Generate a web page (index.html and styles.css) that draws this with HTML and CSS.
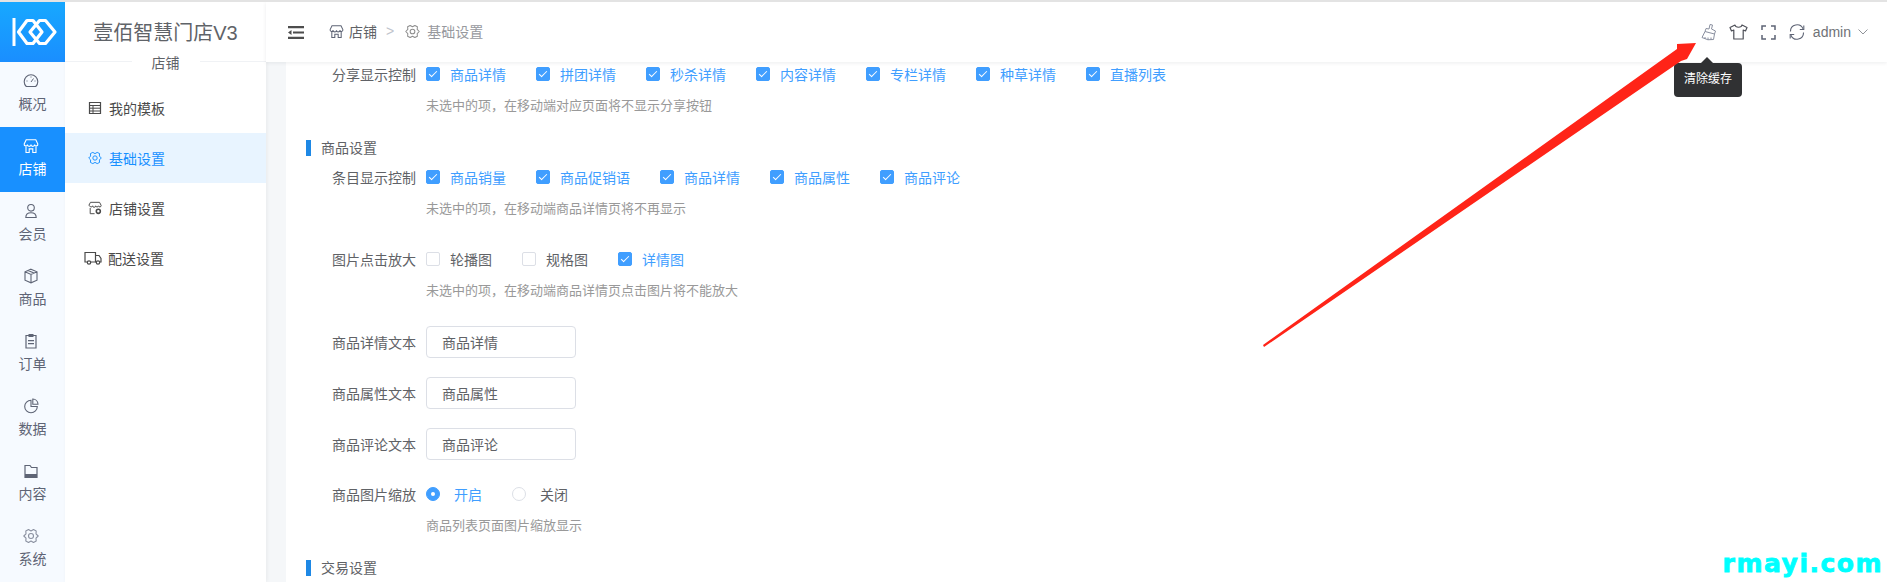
FILE: index.html
```html
<!DOCTYPE html>
<html lang="zh-CN">
<head>
    <meta charset="UTF-8">
    <title>壹佰智慧门店V3</title>
    <link rel="stylesheet" href="styles.css">
</head>
<body>
    <svg class="defs" width="0" height="0">
        <symbol id="i-store" viewBox="0 0 16 16">
            <path d="M3.2 1.8h9.6l2 4.2a1.6 1.6 0 0 1-3.2.6 1.8 1.8 0 0 1-3.6 0 1.8 1.8 0 0 1-3.6 0 1.6 1.6 0 0 1-3.2-.6z" fill="none" stroke="currentColor" stroke-width="1.1"/>
            <path d="M3 8.5v6h3.2v-3.6h3.6v3.6H13v-6" fill="none" stroke="currentColor" stroke-width="1.1"/>
        </symbol>
        <symbol id="i-gear" viewBox="0 0 16 16">
            <path d="M.8 8L3 5.800 2.800 2.900 5.500 1.600 8 3l2.500-1.400 2.700 1.300L13 5.800 15.200 8 13 10.200l.2 2.900-2.700 1.300L8 13l-2.500 1.400-2.700-1.300.2-2.900z" fill="none" stroke="currentColor" stroke-width="1.100" stroke-linejoin="round"/>
            <circle cx="8" cy="8" r="2.500" fill="none" stroke="currentColor" stroke-width="1.100"/>
        </symbol>
    </svg>

    <div class="rail">
        <div class="logo">
            <svg width="48" height="30" viewBox="0 0 48 30">
                <rect x="1.500" y="1" width="3" height="28" fill="#fff"/>
                <path d="M7.500 15L16 3.500h6L31 15l-9 11.500h-6z" fill="none" stroke="#fff" stroke-width="3.200" stroke-linejoin="round"/>
                <path d="M19 15l9.500-11.500h6L44 15l-9.500 11.500h-6z" fill="none" stroke="#fff" stroke-width="3.200" stroke-linejoin="round"/>
            </svg>
        </div>
        <a class="rail-item">
            <svg class="rail-icon" viewBox="0 0 16 16"><path d="M3.300 13.500a6.800 6.800 0 1 1 9.400 0z" fill="none" stroke="currentColor" stroke-width="1.100"/><path d="M8 9l2.500-3.500M8 3.500v1M3.500 8h1M11.500 8h1" stroke="currentColor" fill="none"/></svg>
            <span>概况</span>
        </a>
        <a class="rail-item active">
            <svg class="rail-icon"><use href="#i-store"/></svg>
            <span>店铺</span>
        </a>
        <a class="rail-item">
            <svg class="rail-icon" viewBox="0 0 16 16"><circle cx="8" cy="4.800" r="3.300" fill="none" stroke="currentColor" stroke-width="1.100"/><path d="M2.800 14.500c0-3.200 2-4.800 5.200-4.800s5.200 1.600 5.200 4.800z" fill="none" stroke="currentColor" stroke-width="1.100"/></svg>
            <span>会员</span>
        </a>
        <a class="rail-item">
            <svg class="rail-icon" viewBox="0 0 16 16"><path d="M8 1.200l6 2.600v8.400l-6 2.600-6-2.600V3.800z M2 3.800l6 2.600 6-2.600 M8 6.400v8.400 M5 2.500l6 2.600" fill="none" stroke="currentColor" stroke-width="1.100"/></svg>
            <span>商品</span>
        </a>
        <a class="rail-item">
            <svg class="rail-icon" viewBox="0 0 16 16"><path d="M3 2.500h10v12.500H3z" fill="none" stroke="currentColor" stroke-width="1.200"/><path d="M5.500 1h5v3h-5zM5 7h6v1.200H5zM5 10h6v1.200H5z" fill="currentColor"/></svg>
            <span>订单</span>
        </a>
        <a class="rail-item">
            <svg class="rail-icon" viewBox="0 0 16 16"><path d="M8 2.200a6.300 6.300 0 1 0 6.300 6.300H8z" fill="none" stroke="currentColor" stroke-width="1.100"/><path d="M9.800 1v5.200H15A5.400 5.400 0 0 0 9.800 1z" fill="none" stroke="currentColor" stroke-width="1.100"/></svg>
            <span>数据</span>
        </a>
        <a class="rail-item">
            <svg class="rail-icon" viewBox="0 0 16 16"><path d="M2 2.500h5l1.500 2H14v10H2z" fill="none" stroke="currentColor" stroke-width="1.200"/><path d="M2 11h12v3.500H2z" fill="currentColor"/></svg>
            <span>内容</span>
        </a>
        <a class="rail-item">
            <svg class="rail-icon rail-icon-gear"><use href="#i-gear"/></svg>
            <span>系统</span>
        </a>
    </div>

    <div class="sidebar">
        <div class="brand">壹佰智慧门店V3</div>
        <div class="brand-sub"><span>店铺</span></div>
        <ul class="menu">
            <li class="menu-item">
                <svg class="menu-icon" viewBox="0 0 14 14"><path d="M1.500 1.500h11v11h-11z" fill="none" stroke="currentColor" stroke-width="1.200"/><path d="M1.500 4.500h11M1.500 7.200h11M1.500 10h11M5 4.500v8" stroke="currentColor" fill="none"/></svg>
                <span>我的模板</span>
            </li>
            <li class="menu-item active">
                <svg class="menu-icon"><use href="#i-gear"/></svg>
                <span>基础设置</span>
            </li>
            <li class="menu-item">
                <svg class="menu-icon" viewBox="0 0 16 16"><path d="M2.800 1.500h10.400l1.800 3.500a1.500 1.500 0 0 1-3 .5 1.700 1.700 0 0 1-3.300 0 1.700 1.700 0 0 1-3.400 0 1.700 1.700 0 0 1-3.300 0 1.500 1.500 0 0 1-1-.5zM2.500 8v6.500h5" fill="none" stroke="currentColor" stroke-width="1.100"/><circle cx="11.800" cy="11.800" r="2.300" fill="none" stroke="currentColor" stroke-width="1.800"/></svg>
                <span>店铺设置</span>
            </li>
            <li class="menu-item">
                <svg class="menu-icon menu-icon-wide" viewBox="0 0 18 16"><path d="M3.500 12H1V2.500h10.500V12H6.500" fill="none" stroke="currentColor" stroke-width="1.200"/><path d="M11.500 5.500H15l2 3V12h-1.500M11.500 12h1" fill="none" stroke="currentColor" stroke-width="1.200"/><circle cx="5" cy="12.500" r="1.700" fill="none" stroke="currentColor" stroke-width="1.200"/><circle cx="14" cy="12.500" r="1.700" fill="none" stroke="currentColor" stroke-width="1.200"/></svg>
                <span>配送设置</span>
            </li>
        </ul>
    </div>

    <div class="page">
        <div class="header">
            <svg class="fold" width="16" height="13" viewBox="0 0 16 13"><path d="M0 0h16v2.200H0zM5 5.400h11v2.200H5zM0 10.800h16V13H0zM3.500 4v5L0 6.500z" fill="#4d4d4d"/></svg>
            <div class="crumbs">
                <svg class="crumb-icon crumb-store"><use href="#i-store"/></svg>
                <span class="crumb-main">店铺</span>
                <span class="crumb-sep">&gt;</span>
                <svg class="crumb-icon crumb-gear"><use href="#i-gear"/></svg>
                <span class="crumb-cur">基础设置</span>
            </div>
            <div class="tools">
                <svg class="tool broom" viewBox="0 0 16 17"><path d="M9 .5l2.500.5-1 4 4 2-1 3L4 7.500l1-3 3 .5z" fill="none" stroke="currentColor" stroke-linejoin="round"/><path d="M4 7.500l-3 6q6 3.500 11.500 2l1-5.500M4 13v2M7 13.500V16M10 13.500V16" fill="none" stroke="currentColor"/></svg>
                <svg class="tool shirt" viewBox="0 0 19 16"><path d="M6 1L1 3.500l1.500 3.500 2.300-1V15h9.400V6l2.300 1L18 3.500 13 1c-.5 3-6.500 3-7 0z" fill="none" stroke="currentColor" stroke-width="1.200" stroke-linejoin="round"/></svg>
                <svg class="tool full" viewBox="0 0 15 15"><path d="M1 5V1h4M10 1h4v4M14 10v4h-4M5 14H1v-4" fill="none" stroke="currentColor" stroke-width="1.500"/></svg>
                <svg class="tool refresh" viewBox="0 0 16 16"><path d="M14 4.800A6.500 6.500 0 0 0 1.500 7.500M2 11.200a6.500 6.500 0 0 0 12.500-2.700" fill="none" stroke="currentColor" stroke-width="1.100"/><path d="M14.800 1.500v4h-4M1.200 14.500v-4h4" fill="none" stroke="currentColor" stroke-width="1.100"/></svg>
                <span class="user">admin</span>
                <svg class="caret" width="10" height="6" viewBox="0 0 10 6"><path d="M.5.500L5 5 9.500.500" fill="none" stroke="#909399"/></svg>
            </div>
        </div>

        <div class="main">
            <div class="form">
                <div class="row">
                    <label class="row-label">分享显示控制</label>
                    <div class="row-body">
                        <span class="check on"><i></i>商品详情</span>
                        <span class="check on"><i></i>拼团详情</span>
                        <span class="check on"><i></i>秒杀详情</span>
                        <span class="check on"><i></i>内容详情</span>
                        <span class="check on"><i></i>专栏详情</span>
                        <span class="check on"><i></i>种草详情</span>
                        <span class="check on"><i></i>直播列表</span>
                    </div>
                </div>
                <p class="hint">未选中的项，在移动端对应页面将不显示分享按钮</p>

                <h3 class="section">商品设置</h3>
                <div class="row">
                    <label class="row-label">条目显示控制</label>
                    <div class="row-body">
                        <span class="check on"><i></i>商品销量</span>
                        <span class="check on"><i></i>商品促销语</span>
                        <span class="check on"><i></i>商品详情</span>
                        <span class="check on"><i></i>商品属性</span>
                        <span class="check on"><i></i>商品评论</span>
                    </div>
                </div>
                <p class="hint">未选中的项，在移动端商品详情页将不再显示</p>

                <div class="row row-gap">
                    <label class="row-label">图片点击放大</label>
                    <div class="row-body">
                        <span class="check"><i></i>轮播图</span>
                        <span class="check"><i></i>规格图</span>
                        <span class="check on"><i></i>详情图</span>
                    </div>
                </div>
                <p class="hint">未选中的项，在移动端商品详情页点击图片将不能放大</p>

                <div class="inputs">
                    <div class="row">
                        <label class="row-label">商品详情文本</label>
                        <input class="input" value="商品详情">
                    </div>
                    <div class="row">
                        <label class="row-label">商品属性文本</label>
                        <input class="input" value="商品属性">
                    </div>
                    <div class="row">
                        <label class="row-label">商品评论文本</label>
                        <input class="input" value="商品评论">
                    </div>
                </div>

                <div class="row row-radio">
                    <label class="row-label">商品图片缩放</label>
                    <div class="row-body">
                        <span class="radio on"><i></i>开启</span>
                        <span class="radio"><i></i>关闭</span>
                    </div>
                </div>
                <p class="hint">商品列表页面图片缩放显示</p>

                <h3 class="section">交易设置</h3>
            </div>
        </div>
    </div>

    <div class="tooltip">清除缓存</div>
    <svg class="arrow" width="1887" height="582" viewBox="0 0 1887 582">
        <path d="M1263 345L1677 49 1677 44 1696 43 1687 59 1681 61 1264 347z" fill="#ff2418"/>
    </svg>
    <div class="watermark">rmayi.com</div>
</body>
</html>
```

FILE: styles.css
```css
* {
    box-sizing: border-box;
}
html, body {
    height: 100%;
}
body {
    margin: 0;
    display: flex;
    overflow: hidden;
    border-top: 2px solid #e3e3e3;
    background: #f5f7f9;
    color: #606266;
    font-family: "Liberation Sans", "Noto Sans CJK SC", sans-serif;
    font-size: 14px;
}
.defs {
    position: absolute;
}

/* left rail */
.rail {
    width: 65px;
    flex: none;
    background: #f6faff;
}
.logo {
    height: 60px;
    display: flex;
    align-items: center;
    padding-left: 11px;
    background: linear-gradient(180deg, #17a8ff, #1a8eff);
}
.rail-item {
    height: 65px;
    display: flex;
    flex-direction: column;
    align-items: center;
    padding-top: 11px;
    color: #5e6475;
}
.rail-item span {
    margin-top: 3px;
    line-height: 24px;
}
.rail-item.active {
    background: #1890ff;
    color: #fff;
}
.rail-icon {
    width: 16px;
    height: 16px;
    margin-right: 4px;
}
.rail-icon-gear {
    color: #8a90a0;
}

/* second column */
.sidebar {
    width: 201px;
    flex: none;
    background: #fff;
    box-shadow: 1px 0 4px rgba(0, 0, 0, 0.06);
}
.brand {
    height: 60px;
    line-height: 62px;
    text-align: center;
    font-size: 20px;
    color: #5f6368;
    border-bottom: 1px solid #f0f2f5;
}
.brand-sub {
    height: 14px;
    margin-top: -10px;
    text-align: center;
    line-height: 22px;
    color: #5f6368;
}
.brand-sub span {
    display: inline-block;
    width: 68px;
    background: #fff;
}
.menu {
    list-style: none;
    margin: 0;
    padding: 17px 0 0;
}
.menu-item {
    height: 50px;
    display: flex;
    align-items: center;
    gap: 7px;
    padding-left: 22px;
    color: #4a4a4a;
}
.menu-item.active {
    background: #e8f4ff;
    color: #1890ff;
}
.menu-icon {
    width: 14px;
    height: 14px;
    margin-left: 1px;
}
.menu-icon-wide {
    width: 18px;
    height: 16px;
    margin-left: -3px;
    margin-right: -1px;
}

/* header + content */
.page {
    flex: 1;
    min-width: 0;
    display: flex;
    flex-direction: column;
}
.header {
    height: 60px;
    flex: none;
    position: relative;
    z-index: 2;
    display: flex;
    align-items: center;
    padding: 0 19px 0 22px;
    background: #fff;
    box-shadow: 0 1px 4px rgba(0, 21, 41, 0.08);
}
.fold {
    flex: none;
}
.crumbs {
    display: flex;
    align-items: center;
    margin: -2px 0 0 25px;
}
.crumb-icon {
    width: 15px;
    height: 15px;
}
.crumb-store {
    color: #5e6475;
}
.crumb-gear {
    color: #8e8e8e;
}
.crumb-main {
    margin-left: 5px;
    color: #606266;
}
.crumb-sep {
    margin: 0 11px 0 9px;
    color: #c0c4cc;
}
.crumb-cur {
    margin-left: 7px;
    color: #97999e;
}
.tools {
    margin-left: auto;
    display: flex;
    align-items: center;
    color: #5e6475;
}
.tool {
    flex: none;
}
.broom {
    width: 16px;
    height: 17px;
    color: #8a90a0;
}
.shirt {
    width: 19px;
    height: 16px;
    margin-left: 12px;
    color: #4e5058;
}
.full {
    width: 15px;
    height: 15px;
    margin-left: 13px;
}
.refresh {
    width: 16px;
    height: 16px;
    margin-left: 13px;
}
.user {
    margin-left: 8px;
    color: #6f7277;
}
.caret {
    margin-left: 7px;
}
.main {
    flex: 1;
    min-height: 0;
    margin-left: 20px;
    padding-left: 20px;
    overflow: hidden;
    background: #fff;
}
.form {
    margin-top: -4px;
}

/* form rows */
.row {
    display: flex;
    align-items: center;
    height: 32px;
}
.row-label {
    width: 110px;
    flex: none;
    margin-right: 10px;
    text-align: right;
    color: #606266;
}
.row-body {
    display: flex;
    align-items: center;
}
.row-gap {
    margin-top: 20px;
}
.row-radio {
    margin-top: 18px;
}
.hint {
    height: 30px;
    margin: 0 0 0 120px;
    line-height: 32px;
    font-size: 13px;
    color: #999;
}
.section {
    margin: 20px 0 5px;
    height: 16px;
    padding-left: 10px;
    border-left: 5px solid #1e88e5;
    line-height: 17px;
    font-size: 14px;
    font-weight: normal;
    color: #606266;
}
.inputs {
    margin-top: 21px;
    display: flex;
    flex-direction: column;
    gap: 19px;
}
.input {
    width: 150px;
    height: 32px;
    padding: 0 15px;
    border: 1px solid #dcdfe6;
    border-radius: 4px;
    outline: none;
    font: inherit;
    color: #606266;
}
.check, .radio {
    display: inline-flex;
    align-items: center;
    margin-right: 30px;
    color: #606266;
}
.check i {
    position: relative;
    width: 14px;
    height: 14px;
    margin-right: 10px;
    border: 1px solid #dcdfe6;
    border-radius: 2px;
    background: #fff;
}
.check.on, .radio.on {
    color: #409eff;
}
.check.on i {
    background: #409eff;
    border-color: #409eff;
}
.check.on i::after {
    content: "";
    position: absolute;
    left: 4px;
    top: 1px;
    width: 3px;
    height: 7px;
    border: 1px solid #fff;
    border-width: 0 1px 1px 0;
    transform: rotate(45deg);
}
.radio i {
    position: relative;
    width: 14px;
    height: 14px;
    margin-right: 14px;
    border: 1px solid #dcdfe6;
    border-radius: 50%;
    background: #fff;
}
.radio.on i {
    background: #409eff;
    border-color: #409eff;
}
.radio.on i::after {
    content: "";
    position: absolute;
    left: 4px;
    top: 4px;
    width: 4px;
    height: 4px;
    border-radius: 50%;
    background: #fff;
}

/* things lying over the page */
.tooltip {
    position: absolute;
    left: 1674px;
    top: 63px;
    width: 68px;
    height: 34px;
    line-height: 33px;
    text-align: center;
    font-size: 12px;
    color: #fff;
    background: #303133;
    border-radius: 4px;
    z-index: 3;
}
.tooltip::before {
    content: "";
    position: absolute;
    left: 27px;
    top: -6px;
    border: 6px solid transparent;
    border-top-width: 0;
    border-bottom-color: #303133;
}
.arrow {
    position: absolute;
    left: 0;
    top: 0;
    z-index: 4;
    pointer-events: none;
}
.watermark {
    position: absolute;
    right: 4px;
    bottom: 4px;
    z-index: 4;
    font-family: "DejaVu Sans", sans-serif;
    font-weight: bold;
    font-size: 25px;
    letter-spacing: 1.5px;
    -webkit-text-stroke: 0.8px #00ffff;
    color: #00ffff;
}
```
